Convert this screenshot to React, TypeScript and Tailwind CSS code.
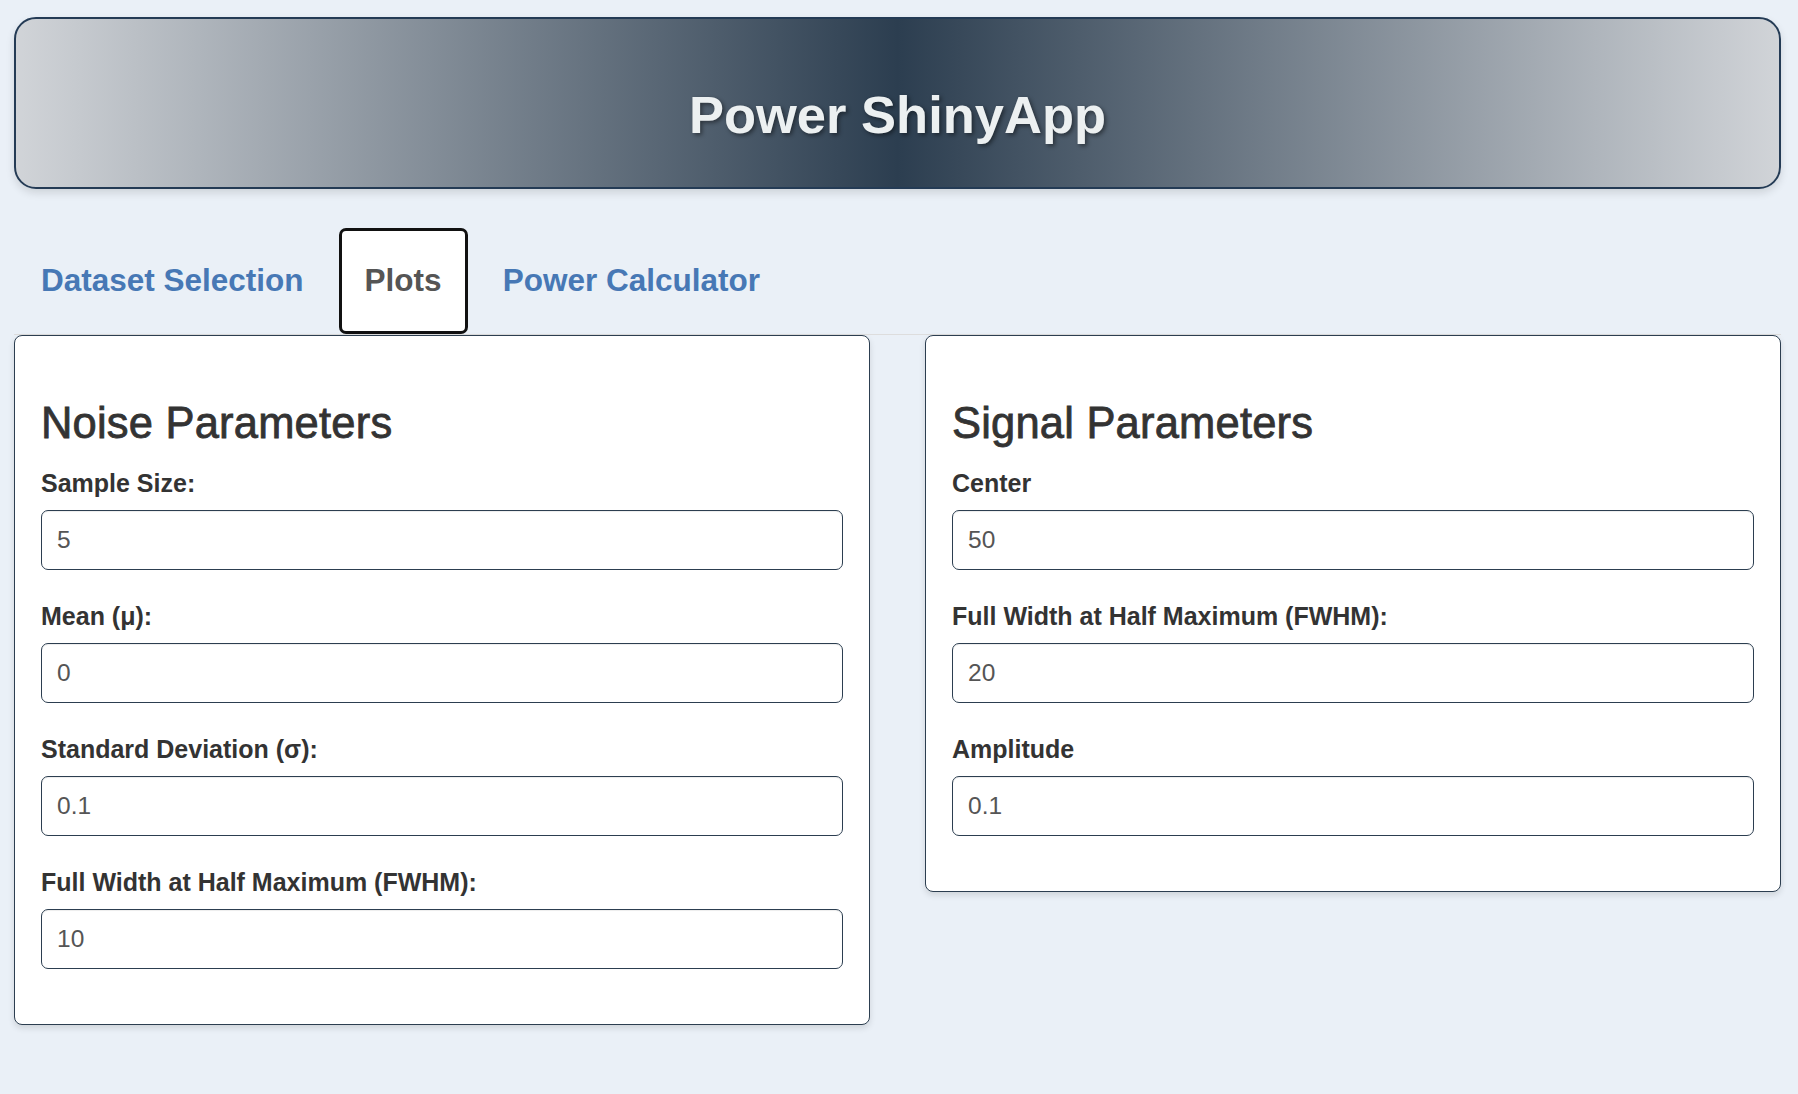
import React from "react";

const font = { fontFamily: '"Liberation Sans", Arial, Helvetica, sans-serif' };

function Field({ label, value }: { label: string; value: string }) {
  return (
    <div className="mb-[29px] flex flex-col">
      <label className="mb-[9px] block h-[35px] text-[25px] font-bold leading-[35px] text-[#333]">
        {label}
      </label>
      <input
        readOnly
        value={value}
        className="h-[60px] w-full rounded-[7px] border border-[#2c3e50] bg-white px-[15px] text-[24.5px] text-[#555] shadow-[inset_0_1px_1px_rgba(0,0,0,0.075)] outline-none"
      />
    </div>
  );
}

function Card({ title, fields }: { title: string; fields: [string, string][] }) {
  return (
    <div className="rounded-[8px] border border-[#2c3e50] bg-white px-[26px] pb-[26px] pt-[26px] shadow-[0_3px_6px_rgba(0,0,0,0.12)]">
      <h3 className="mb-[20px] mt-[38px] text-[43.5px] leading-[46px] tracking-[0.2px] text-[#333] [-webkit-text-stroke:0.8px_#333]">
        {title}
      </h3>
      {fields.map(([l, v]) => (
        <Field key={l} label={l} value={v} />
      ))}
    </div>
  );
}

export default function App() {
  return (
    <div className="min-h-[1094px] w-full bg-[#eaf0f7] pl-[14px] pr-[17px]" style={font}>
      <div className="pt-[17px]">
        <div className="flex h-[172px] justify-center rounded-[22px] border-2 border-[#243b55] bg-[linear-gradient(to_right,#d1d4d8,#2c3e50,#d1d4d8)] pt-[66px] shadow-[0_4px_8px_rgba(0,0,0,0.12)]">
          <h1 className="text-[52.5px] font-bold leading-[60px] text-[#ecf0f1] [text-shadow:2px_2px_4px_rgba(0,0,0,0.45)]">
            Power ShinyApp
          </h1>
        </div>
      </div>

      <div className="mt-[39px] flex border-b border-[#dddddd]">
        <div className="mr-[8px] flex h-[106px] items-center border-[3px] border-transparent px-[24px] text-[31.5px] font-bold text-[#4778b5]">
          Dataset Selection
        </div>
        <div className="mr-[8px] flex h-[106px] items-center rounded-[7px] border-[3px] border-[#111] bg-white px-[23px] text-[31.5px] font-bold text-[#555]">
          Plots
        </div>
        <div className="flex h-[106px] items-center border-[3px] border-transparent px-[24px] text-[31.5px] font-bold text-[#4778b5]">
          Power Calculator
        </div>
      </div>

      <div className="grid grid-cols-2 items-start gap-x-[55px]">
        <Card
          title="Noise Parameters"
          fields={[
            ["Sample Size:", "5"],
            ["Mean (μ):", "0"],
            ["Standard Deviation (σ):", "0.1"],
            ["Full Width at Half Maximum (FWHM):", "10"],
          ]}
        />
        <Card
          title="Signal Parameters"
          fields={[
            ["Center", "50"],
            ["Full Width at Half Maximum (FWHM):", "20"],
            ["Amplitude", "0.1"],
          ]}
        />
      </div>
    </div>
  );
}
